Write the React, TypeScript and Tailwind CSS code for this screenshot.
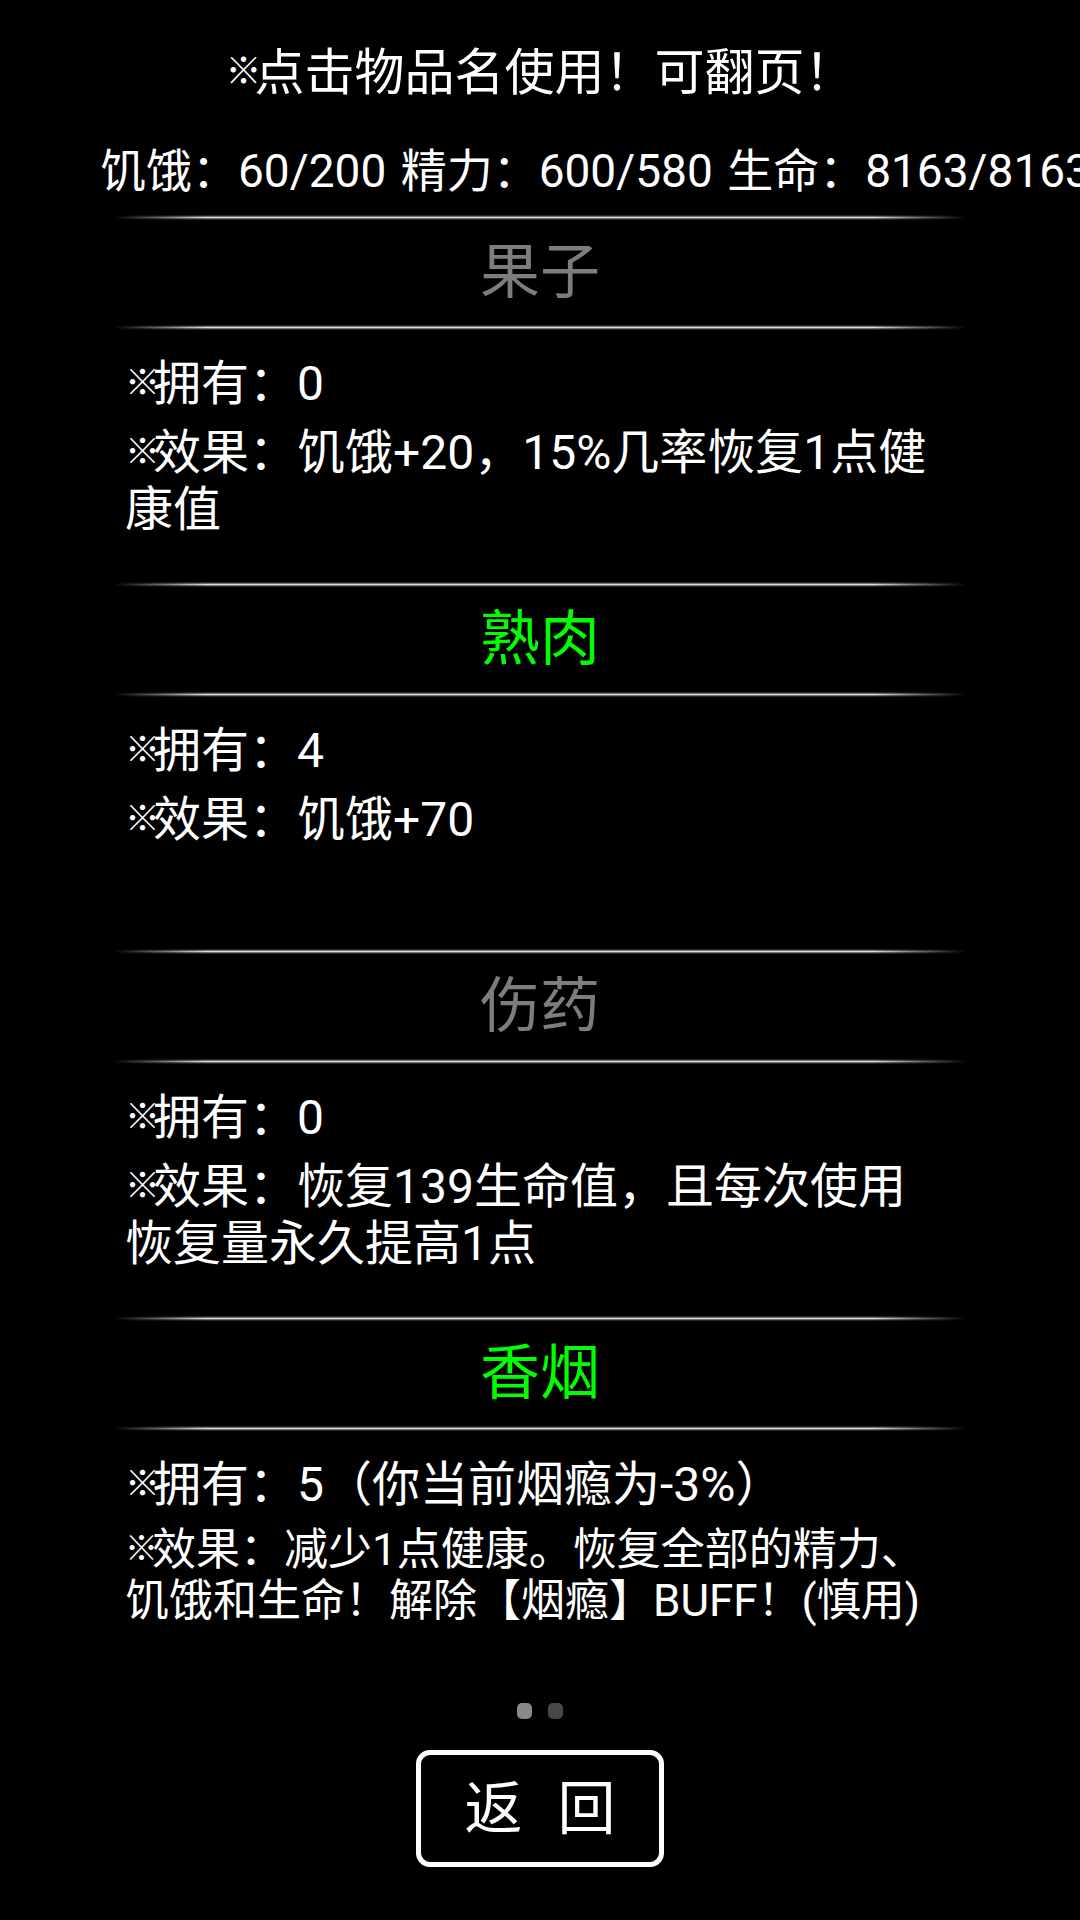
import React from "react";

type Item = {
  name: string;
  usable: boolean;
  owned: string;
  effect: string[];
  small?: boolean;
};

const items: Item[] = [
  { name: "果子", usable: false, owned: "0", effect: ["效果：饥饿+20，15%几率恢复1点健", "康值"] },
  { name: "熟肉", usable: true, owned: "4", effect: ["效果：饥饿+70"] },
  { name: "伤药", usable: false, owned: "0", effect: ["效果：恢复139生命值，且每次使用", "恢复量永久提高1点"] },
  {
    name: "香烟",
    usable: true,
    owned: "5（你当前烟瘾为-3%）",
    effect: ["效果：减少1点健康。恢复全部的精力、", "饥饿和生命！解除【烟瘾】BUFF！(慎用)"],
    small: true,
  },
];

// 窄一点的 ※
const Mark = ({ className }: { className: string }) => <span className={className}>※</span>;

// 发光分割线
const Divider = () => (
  <div className="mx-[113px] h-[5px] bg-[linear-gradient(180deg,transparent,#5a5a5a_25%,#dcdcdc_50%,#5a5a5a_75%,transparent)] [mask-image:linear-gradient(90deg,transparent,#000_11%,#000_89%,transparent)]" />
);

const Section = ({ item }: { item: Item }) => (
  <div>
    <Divider />
    <div
      className={`flex h-[105px] items-center justify-center text-[60px] leading-none ${
        item.usable ? "text-[#00ff00]" : "text-[#7d7d7d]"
      }`}
    >
      {item.name}
    </div>
    <Divider />
    <div className="h-[252px] pl-[125px] pt-[25px] text-white">
      <div className="whitespace-nowrap text-[48px] leading-[57px]">
        <Mark className="text-[35px] tracking-[-7px] align-[5px]" />
        拥有：{item.owned}
      </div>
      <div
        className={
          item.small
            ? "mt-[10px] text-[44px] leading-[51px]"
            : "mt-[12px] text-[48px] leading-[57px]"
        }
      >
        {item.effect.map((line, i) => (
          <div key={line} className="whitespace-nowrap">
            {i === 0 && (
              <Mark
                className={
                  item.small
                    ? "text-[33px] tracking-[-6px] align-[5px]"
                    : "text-[35px] tracking-[-7px] align-[5px]"
                }
              />
            )}
            {line}
          </div>
        ))}
      </div>
    </div>
  </div>
);

export default function App() {
  return (
    <div className="h-[1920px] w-[1080px] overflow-hidden bg-black font-['Roboto','Noto_Sans_CJK_SC',sans-serif] text-white">
      <div className="pt-[44px] text-center text-[50px] leading-[56px]">
        <Mark className="text-[36px] tracking-[-7px] align-[6px]" />
        点击物品名使用！可翻页！
      </div>
      <div className="mt-[42px] whitespace-nowrap pl-[100px] text-[46px] leading-[56px] [word-spacing:3px]">
        饥饿：60/200 精力：600/580 生命：8163/8163
      </div>
      <div className="mt-[16px]">
        {items.map((item) => (
          <Section key={item.name} item={item} />
        ))}
      </div>
      {/* 翻页指示 */}
      <div className="mt-[20px] flex justify-center gap-[16px]">
        <div className="h-[16px] w-[15px] rounded-[5px] bg-[#8a8a8a]" />
        <div className="h-[16px] w-[15px] rounded-[5px] bg-[#474747]" />
      </div>
      <div className="mt-[31px] flex justify-center">
        <button className="flex h-[117px] w-[248px] items-center justify-center gap-[35px] rounded-[14px] border-[5px] border-white text-[58px] leading-none text-white">
          <span>返</span>
          <span>回</span>
        </button>
      </div>
    </div>
  );
}
